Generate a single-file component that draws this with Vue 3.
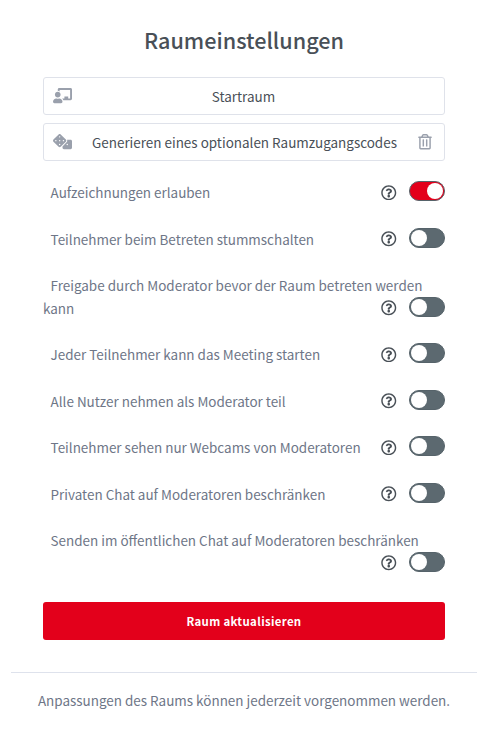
<script setup>
import { reactive } from "vue";

// Настройки комнаты
const settings = reactive([
  { id: "recording", label: "Aufzeichnungen erlauben", enabled: true },
  { id: "mute", label: "Teilnehmer beim Betreten stummschalten", enabled: false },
  { id: "approval", label: "Freigabe durch Moderator bevor der Raum betreten werden kann", enabled: false },
  { id: "anyone-start", label: "Jeder Teilnehmer kann das Meeting starten", enabled: false },
  { id: "all-moderators", label: "Alle Nutzer nehmen als Moderator teil", enabled: false },
  { id: "webcams", label: "Teilnehmer sehen nur Webcams von Moderatoren", enabled: false },
  { id: "private-chat", label: "Privaten Chat auf Moderatoren beschränken", enabled: false },
  { id: "public-chat", label: "Senden im öffentlichen Chat auf Moderatoren beschränken", enabled: false },
]);
</script>

<template>
  <div class="modal">
    <form class="modal-body" @submit.prevent>
      <h3 class="title">Raumeinstellungen</h3>

      <div class="field">
        <svg class="icon-wide" viewBox="0 0 640 512">
          <path d="M208 352c-2.39 0-4.78.35-7.06 1.09C187.98 357.3 174.35 360 160 360c-14.35 0-27.98-2.7-40.95-6.91-2.28-.74-4.66-1.09-7.05-1.09C49.94 352-.33 402.48 0 464.62.14 490.88 21.73 512 48 512h224c26.27 0 47.86-21.12 48-47.38.33-62.14-49.94-112.62-112-112.62zm-48-32c53.02 0 96-42.98 96-96s-42.98-96-96-96-96 42.98-96 96 42.98 96 96 96zM592 0H208c-26.47 0-48 22.25-48 49.59V96c23.42 0 45.1 6.78 64 17.8V64h352v288h-64v-64H384v64h-76.24c19.1 16.69 33.12 38.73 39.69 64H592c26.47 0 48-22.25 48-49.59V49.59C640 22.25 618.47 0 592 0z" />
        </svg>
        <span class="field-text room-name">Startraum</span>
      </div>

      <div class="field">
        <svg class="icon-wide" viewBox="0 0 640 512">
          <path fill-rule="evenodd" d="M592 192H473.26c12.69 29.59 7.12 65.2-17 89.32L320 417.58V464c0 26.51 21.49 48 48 48h224c26.51 0 48-21.49 48-48V240c0-26.51-21.49-48-48-48zM480 376a24 24 0 1 1 0-48 24 24 0 0 1 0 48zM433.63 189.3L258.7 14.37c-19.16-19.16-50.23-19.16-69.39 0L14.37 189.3c-19.16 19.16-19.16 50.23 0 69.39L189.3 433.63c19.16 19.16 50.23 19.16 69.39 0L433.63 258.7c19.16-19.17 19.16-50.24 0-69.4zM96 248a24 24 0 1 1 0-48 24 24 0 0 1 0 48zM224 376a24 24 0 1 1 0-48 24 24 0 0 1 0 48zM224 248a24 24 0 1 1 0-48 24 24 0 0 1 0 48zM224 120a24 24 0 1 1 0-48 24 24 0 0 1 0 48zM352 248a24 24 0 1 1 0-48 24 24 0 0 1 0 48z" />
        </svg>
        <span class="field-text access-code">Generieren eines optionalen Raumzugangscodes</span>
        <svg class="icon-trash" viewBox="0 0 448 512">
          <path d="M268 416h24a12 12 0 0 0 12-12V188a12 12 0 0 0-12-12h-24a12 12 0 0 0-12 12v216a12 12 0 0 0 12 12zM432 80h-82.41l-34-56.7A48 48 0 0 0 274.41 0H173.59a48 48 0 0 0-41.16 23.3L98.41 80H16A16 16 0 0 0 0 96v16a16 16 0 0 0 16 16h16v336a48 48 0 0 0 48 48h288a48 48 0 0 0 48-48V128h16a16 16 0 0 0 16-16V96a16 16 0 0 0-16-16zM171.84 50.91A6 6 0 0 1 177 48h94a6 6 0 0 1 5.15 2.91L293.61 80H154.39zM368 464H80V128h288zm-212-48h24a12 12 0 0 0 12-12V188a12 12 0 0 0-12-12h-24a12 12 0 0 0-12 12v216a12 12 0 0 0 12 12z" />
        </svg>
      </div>

      <div class="settings">
        <label v-for="item in settings" :key="item.id" class="setting">
          <span class="label-text">{{ item.label }}</span>
          <span class="controls">
            <svg class="icon-help" viewBox="0 0 512 512">
              <path d="M256 8C119.043 8 8 119.083 8 256c0 136.997 111.043 248 248 248s248-111.003 248-248C504 119.083 392.957 8 256 8zm0 448c-110.532 0-200-89.431-200-200 0-110.495 89.472-200 200-200 110.491 0 200 89.471 200 200 0 110.53-89.431 200-200 200zm107.244-255.2c0 67.052-72.421 68.084-72.421 92.863V300c0 6.627-5.373 12-12 12h-45.647c-6.627 0-12-5.373-12-12v-8.659c0-35.745 27.1-50.034 47.579-61.516 17.561-9.845 28.324-16.541 28.324-29.579 0-17.246-21.999-28.693-39.784-28.693-23.189 0-33.894 10.977-48.942 29.969-4.057 5.12-11.46 6.071-16.666 2.124l-27.824-21.098c-5.107-3.872-6.251-11.066-2.644-16.363C184.846 131.491 214.94 112 261.794 112c49.071 0 101.45 38.304 101.45 88.8zM298 368c0 23.159-18.841 42-42 42s-42-18.841-42-42 18.841-42 42-42 42 18.841 42 42z" />
            </svg>
            <input v-model="item.enabled" type="checkbox" class="switch-input" />
            <span class="switch" :class="{ on: item.enabled }"></span>
          </span>
        </label>
      </div>

      <button type="submit" class="submit">Raum aktualisieren</button>
    </form>

    <div class="modal-footer">
      <p>Anpassungen des Raums können jederzeit vorgenommen werden.</p>
    </div>
  </div>
</template>

<style>
body {
  margin: 0;
  background: #fff;
}
</style>

<style scoped>
.modal {
  box-sizing: border-box;
  width: 492px;
  height: 732px;
  padding: 23px 15px 0 11px;
  background: #fff;
  color: #495057;
  font-family: "Noto Sans CJK SC", "Noto Sans", sans-serif;
  font-size: 13.46px;
  line-height: 22.5px;
}

.modal-body {
  padding: 0 32px;
}

.title {
  margin: 0 0 21px;
  font-size: 21.6px;
  font-weight: 500;
  line-height: 33px;
  text-align: center;
}

.field {
  box-sizing: border-box;
  display: flex;
  align-items: center;
  height: 38px;
  margin-bottom: 8px;
  padding: 0 12px 0 9px;
  border: 1px solid #dfe2ea;
  border-radius: 3px;
}

.field svg {
  flex: none;
  fill: #9aa0ac;
}

.icon-wide {
  width: 19px;
  height: 15.2px;
}

.icon-trash {
  width: 14px;
  height: 15.5px;
}

.field-text {
  flex: 1;
  text-align: center;
  white-space: nowrap;
}

.room-name {
  padding-right: 17px;
}

.access-code {
  padding-right: 1px;
}

.settings {
  padding-top: 12.25px;
}

.setting {
  display: flow-root;
  margin-bottom: 24px;
  color: #6e7687;
  text-indent: 7.6px;
}

.controls {
  float: right;
  display: flex;
  align-items: center;
  height: 22.5px;
  text-indent: 0;
}

.icon-help {
  width: 15.5px;
  height: 15.5px;
  margin-right: 12.25px;
  fill: #495057;
}

.switch-input {
  display: none;
}

.switch {
  box-sizing: border-box;
  width: 36px;
  height: 20px;
  margin-bottom: 2.5px;
  padding: 1px;
  border: 1px solid #56636a;
  border-radius: 10px;
  background: #5c6970;
}

.switch::before {
  content: "";
  display: block;
  width: 16px;
  height: 16px;
  border-radius: 50%;
  background: #fff;
}

.switch.on {
  background: #e3001b;
}

.switch.on::before {
  margin-left: 16px;
}

.submit {
  display: block;
  width: 100%;
  height: 38px;
  margin: 27.75px 0 0;
  padding: 0;
  border: 0;
  border-radius: 3px;
  background: #e3001b;
  color: #fff;
  font: 700 11.4px/20px "Noto Sans CJK SC", "Noto Sans", sans-serif;
  letter-spacing: 0.35px;
}

.modal-footer {
  margin-top: 32px;
  padding-top: 16px;
  border-top: 1px solid #dee2ec;
  color: #6e7687;
  text-align: center;
}

.modal-footer p {
  margin: 0;
  white-space: nowrap;
}
</style>
